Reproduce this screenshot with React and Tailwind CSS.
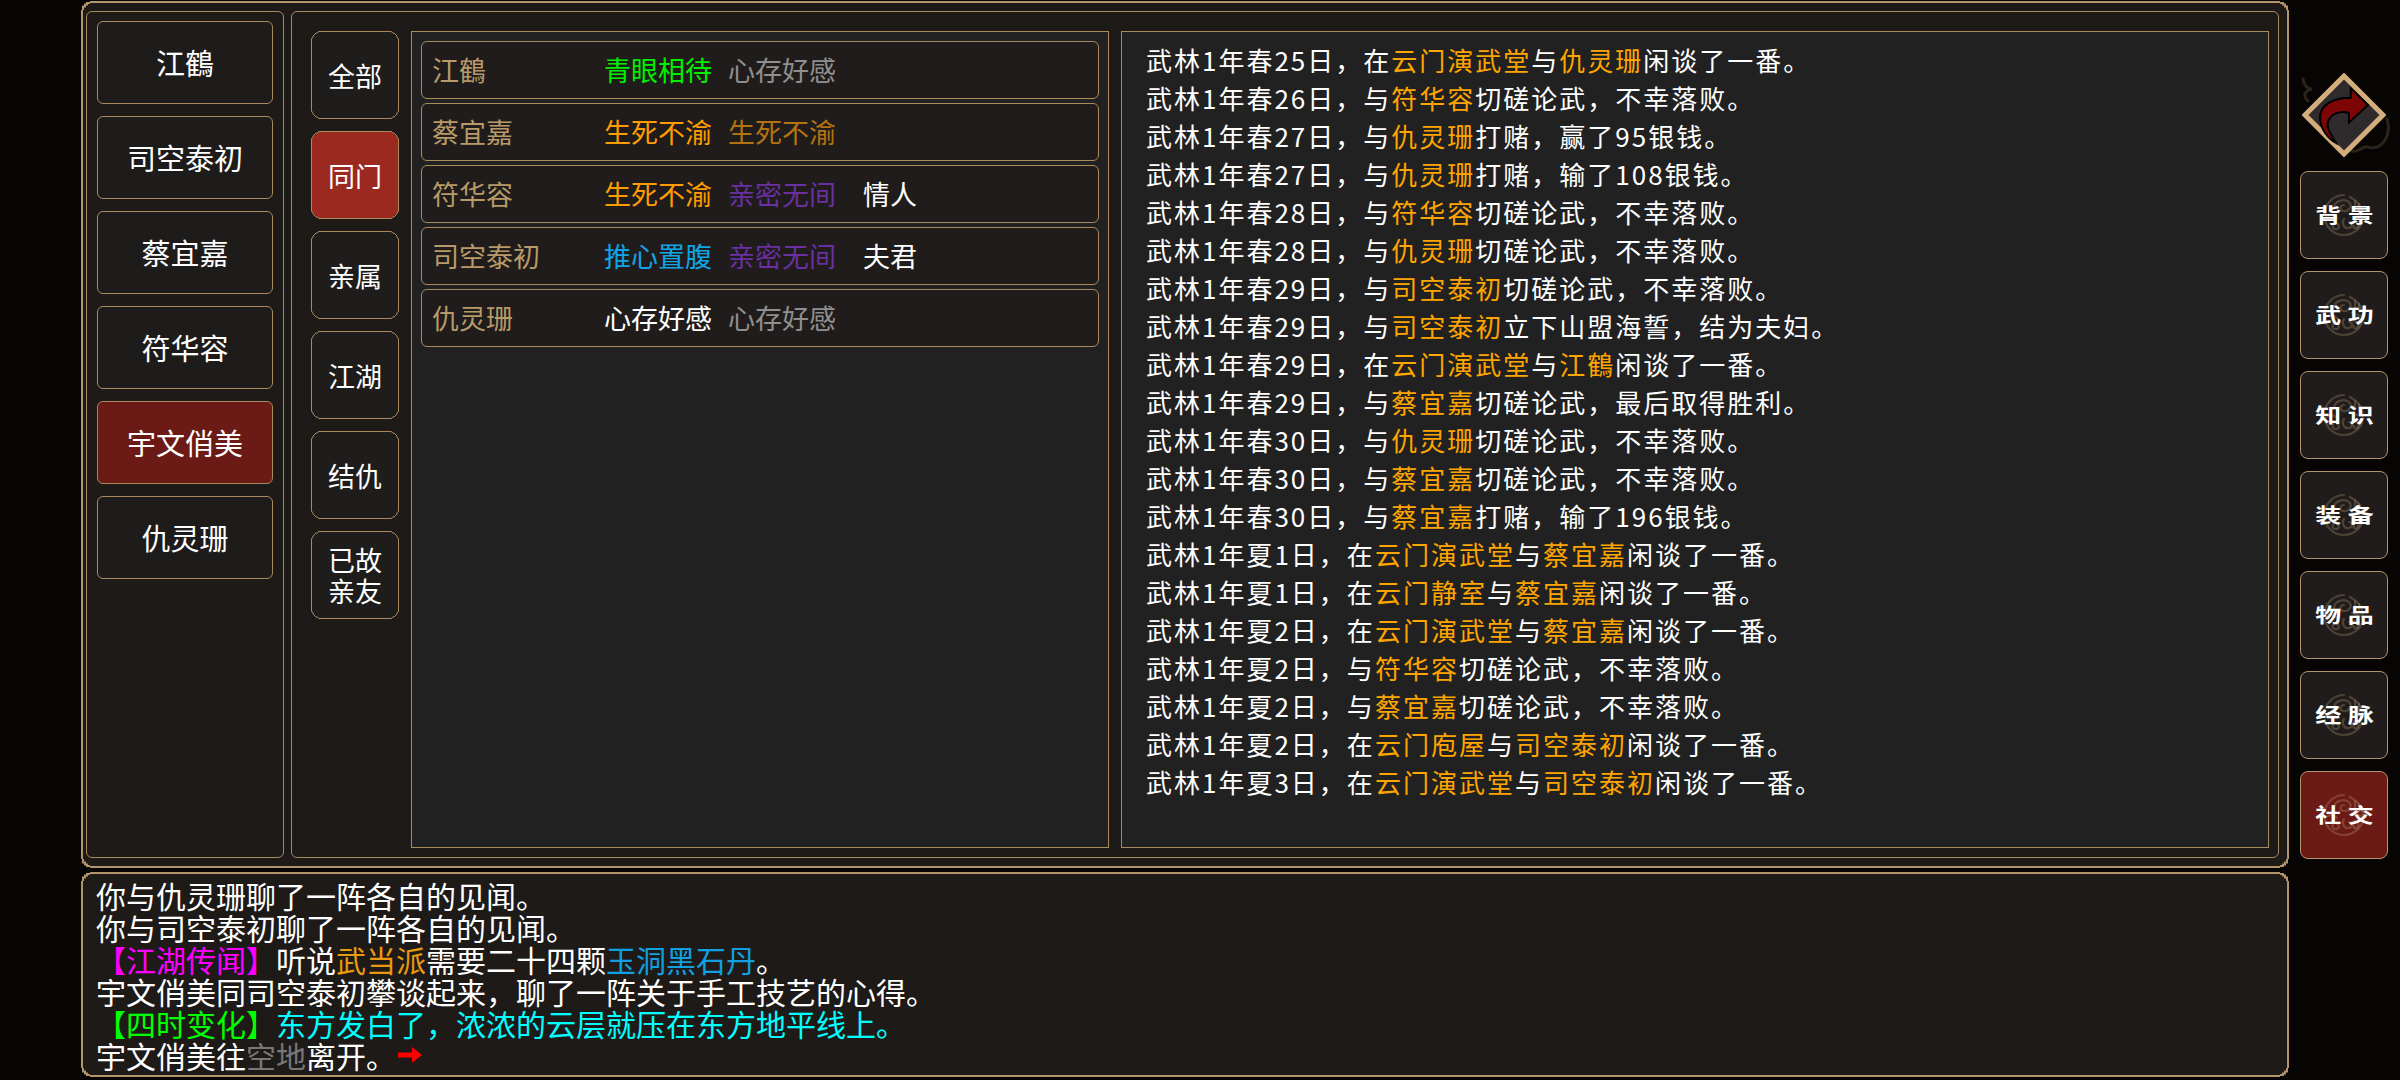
const FONT = "font-['Noto_Sans_CJK_SC','Noto_Sans',sans-serif]";

const people = ['江鶴', '司空泰初', '蔡宜嘉', '符华容', '宇文俏美', '仇灵珊'];
const tabs = [['全部'], ['同门'], ['亲属'], ['江湖'], ['结仇'], ['已故', '亲友']];
const sideButtons = ['背景', '武功', '知识', '装备', '物品', '经脉', '社交'];

const relations = [
  { name: '江鶴', a: ['青眼相待', 'text-[#00f000]'], b: ['心存好感', 'text-[#8f8f8f]'] },
  { name: '蔡宜嘉', a: ['生死不渝', 'text-[#ff9c00]'], b: ['生死不渝', 'text-[#b5730f]'] },
  { name: '符华容', a: ['生死不渝', 'text-[#ff9c00]'], b: ['亲密无间', 'text-[#6a2fa0]'], tag: '情人' },
  { name: '司空泰初', a: ['推心置腹', 'text-[#10a5e8]'], b: ['亲密无间', 'text-[#6a2fa0]'], tag: '夫君' },
  { name: '仇灵珊', a: ['心存好感', 'text-white'], b: ['心存好感', 'text-[#8f8f8f]'] },
];

// {} marks the orange names and places
const logLines = [
  '武林1年春25日，在{云门演武堂}与{仇灵珊}闲谈了一番。',
  '武林1年春26日，与{符华容}切磋论武，不幸落败。',
  '武林1年春27日，与{仇灵珊}打赌，赢了95银钱。',
  '武林1年春27日，与{仇灵珊}打赌，输了108银钱。',
  '武林1年春28日，与{符华容}切磋论武，不幸落败。',
  '武林1年春28日，与{仇灵珊}切磋论武，不幸落败。',
  '武林1年春29日，与{司空泰初}切磋论武，不幸落败。',
  '武林1年春29日，与{司空泰初}立下山盟海誓，结为夫妇。',
  '武林1年春29日，在{云门演武堂}与{江鶴}闲谈了一番。',
  '武林1年春29日，与{蔡宜嘉}切磋论武，最后取得胜利。',
  '武林1年春30日，与{仇灵珊}切磋论武，不幸落败。',
  '武林1年春30日，与{蔡宜嘉}切磋论武，不幸落败。',
  '武林1年春30日，与{蔡宜嘉}打赌，输了196银钱。',
  '武林1年夏1日，在{云门演武堂}与{蔡宜嘉}闲谈了一番。',
  '武林1年夏1日，在{云门静室}与{蔡宜嘉}闲谈了一番。',
  '武林1年夏2日，在{云门演武堂}与{蔡宜嘉}闲谈了一番。',
  '武林1年夏2日，与{符华容}切磋论武，不幸落败。',
  '武林1年夏2日，与{蔡宜嘉}切磋论武，不幸落败。',
  '武林1年夏2日，在{云门庖屋}与{司空泰初}闲谈了一番。',
  '武林1年夏3日，在{云门演武堂}与{司空泰初}闲谈了一番。',
];

function LogLine({ text }) {
  const parts = text.split(/[{}]/);
  return (
    <div className="h-[38px] leading-[38px] whitespace-nowrap">
      {parts.map((p, i) => (
        <span key={i} className={i % 2 ? 'text-[#ffa500]' : 'text-white'}>{p}</span>
      ))}
    </div>
  );
}

// stepped notch of the big frames
function FrameCorner({ className }) {
  return (
    <svg className={`absolute w-[9px] h-[9px] ${className}`} viewBox="0 0 9 9">
      <path d="M0 0H9V1H5V3H3V5H1V9H0Z" fill="#050403" />
      <path d="M2 9V5.5H4V3.5H6V2H9" fill="none" stroke="#b3956b" strokeWidth="2" />
    </svg>
  );
}

function Frame({ className, children }) {
  return (
    <div className={`relative border-2 border-[#b3956b] bg-[#1d1a18] ${className}`}>
      <FrameCorner className="-left-[2px] -top-[2px]" />
      <FrameCorner className="-right-[2px] -top-[2px] -scale-x-100" />
      <FrameCorner className="-left-[2px] -bottom-[2px] -scale-y-100" />
      <FrameCorner className="-right-[2px] -bottom-[2px] -scale-100" />
      {children}
    </div>
  );
}

function TabCorner({ className }) {
  return (
    <svg className={`absolute w-[8px] h-[8px] ${className}`} viewBox="0 0 8 8">
      <path d="M0 0H8L0 8Z" fill="#1d1a18" />
      <path d="M0.5 7.5L2 6.5V5L5 2H6.5L7.5 0.5" fill="none" stroke="#a98a5e" />
    </svg>
  );
}

function Tab({ lines, active }) {
  return (
    <div
      className={`relative h-[88px] w-[88px] flex flex-col items-center justify-center border border-[#a98a5e] text-[27px] leading-[31px] text-white ${
        active ? 'bg-[#9c291f]' : 'bg-[#1f1d1c]'
      }`}
    >
      <TabCorner className="-left-px -top-px" />
      <TabCorner className="-right-px -top-px -scale-x-100" />
      <TabCorner className="-left-px -bottom-px -scale-y-100" />
      <TabCorner className="-right-px -bottom-px -scale-100" />
      {lines.map((l) => (
        <div key={l}>{l}</div>
      ))}
    </div>
  );
}

function Medallion() {
  return (
    <svg className="absolute left-1/2 top-1/2 -translate-x-1/2 -translate-y-1/2 w-[44px] h-[44px]" viewBox="0 0 44 44">
      <g fill="none" stroke="#b89a78" strokeOpacity="0.3" strokeWidth="2.2" strokeLinecap="round">
        <path d="M22 2C13 2 6 8 3 16" />
        <path d="M12 15C12 8 22 5 27 9C31 13 27 19 21 18C17 17 18 12 22 12" />
        <path d="M28 4C34 7 40 13 41 21" />
        <path d="M33 8V16M37 11V19M30 20C34 22 38 22 41 24" />
        <path d="M4 24C8 21 12 22 15 25" />
        <path d="M3 27C5 36 13 42 22 42C30 42 37 37 40 30" />
        <path d="M12 30C9 33 11 37 15 36C18 35 17 31 15 31" />
        <path d="M22 26C19 30 22 36 27 35C31 34 31 29 27 29" />
        <path d="M32 28C36 28 38 32 35 35C33 36 31 35 32 33" />
      </g>
    </svg>
  );
}

function SideButton({ label, active }) {
  return (
    <div
      className={`relative h-[88px] w-[88px] flex items-center justify-center rounded-lg border border-[#b3956b] ${
        active ? 'bg-[#6b1a16]' : 'bg-[#1f1c1b]'
      }`}
    >
      <Medallion />
      <span className="relative scale-x-[1.3] text-[20px] font-bold leading-none tracking-[5px] pl-[5px] text-white">
        {label}
      </span>
    </div>
  );
}

function BackArrow() {
  return (
    <div className="relative h-[84px] w-[84px] my-[0px]">
      <svg className="absolute -left-[12px] -top-[10px] w-[108px] h-[104px]" viewBox="0 0 108 104">
        <g fill="none" stroke="#2a241a" strokeWidth="3" strokeLinecap="round">
          <path d="M13 16C14 22 17 26 22 26C15 28 12 32 18 38" />
          <path d="M97 56C102 72 92 88 78 84C72 82 70 90 62 88" />
        </g>
      </svg>
      <svg className="absolute inset-0 w-[84px] h-[84px]" viewBox="0 0 84 84">
        <path d="M42 3L81 42L42 81L3 42Z" fill="#2f2b2d" stroke="#d3ad7b" strokeWidth="5" />
        <path
          d="M66 32L48.7 15.3V25C32 24 18 32 18 44C18 55 25 65 34 70C28 60 24 54 26 49C28 41 38 37 47 40V49.5Z"
          fill="#7d0505"
          stroke="#000"
          strokeWidth="2"
        />
      </svg>
    </div>
  );
}

export default function App() {
  return (
    <div className={`${FONT} flex h-[1080px] w-[2400px] overflow-hidden bg-[#070504] pl-[81px]`}>
      <div className="flex w-[2208px] flex-col pt-[1px]">
        <Frame className="flex h-[867px] gap-[7px] pb-[8px] pl-[3px] pr-[8px] pt-[8px]">
          <div className="flex w-[198px] flex-col gap-[12px] rounded-md border border-[#a98a5e] px-[10px] pt-[9px]">
            {people.map((p) => (
              <div
                key={p}
                className={`flex h-[83px] items-center justify-center rounded-md border border-[#a98a5e] text-[29px] text-white ${
                  p === '宇文俏美' ? 'bg-[#6b1a16]' : 'bg-[#1e1c1b]'
                }`}
              >
                {p}
              </div>
            ))}
          </div>

          <div className="flex flex-1 gap-[12px] rounded-md border border-[#a98a5e] pb-[9px] pl-[19px] pr-[9px] pt-[19px]">
            <div className="flex w-[88px] flex-col gap-[12px]">
              {tabs.map((t, i) => (
                <Tab key={t[0]} lines={t} active={i === 1} />
              ))}
            </div>

            <div className="flex w-[698px] flex-col gap-[4px] border border-[#a98a5e] bg-[#212121] px-[9px] pt-[9px]">
              {relations.map((r) => (
                <div
                  key={r.name}
                  className="flex h-[58px] items-center rounded-md border border-[#a98a5e] bg-[#1f1c1b] pl-[10px] text-[27px]"
                >
                  <span className="w-[172px] text-[#b89a68]">{r.name}</span>
                  <span className={`w-[124px] ${r.a[1]}`}>{r.a[0]}</span>
                  <span className={`w-[135px] ${r.b[1]}`}>{r.b[0]}</span>
                  {r.tag && <span className="text-white">{r.tag}</span>}
                </div>
              ))}
            </div>

            <div className="flex-1 border border-[#a98a5e] bg-[#212121] pl-[24px] pt-[9px] text-[26px] tracking-[2px]">
              {logLines.map((l, i) => (
                <LogLine key={i} text={l} />
              ))}
            </div>
          </div>
        </Frame>

        <Frame className="mt-[4px] h-[205px] pl-[13px] pt-[5px] text-[30px] leading-[32px] text-white whitespace-nowrap">
          <div>你与仇灵珊聊了一阵各自的见闻。</div>
          <div>你与司空泰初聊了一阵各自的见闻。</div>
          <div>
            <span className="text-[#ff00ff]">【江湖传闻】</span>听说
            <span className="text-[#e89a10]">武当派</span>需要二十四颗
            <span className="text-[#109fe0]">玉洞黑石丹</span>。
          </div>
          <div>宇文俏美同司空泰初攀谈起来，聊了一阵关于手工技艺的心得。</div>
          <div>
            <span className="text-[#00ff00]">【四时变化】</span>
            <span className="text-[#00ffff]">东方发白了，浓浓的云层就压在东方地平线上。</span>
          </div>
          <div className="flex items-center">
            <span>宇文俏美往</span>
            <span className="text-[#777777]">空地</span>
            <span>离开。</span>
            <svg className="ml-[2px] h-[16px] w-[24px]" viewBox="0 0 24 16">
              <path d="M0 5.5H14V0L24 8L14 16V10.5H0Z" fill="#ff0000" />
            </svg>
          </div>
        </Frame>
      </div>

      <div className="flex flex-1 flex-col items-center pt-[73px] pr-[1px]">
        <BackArrow />
        <div className="mt-[14px] flex flex-col gap-[12px]">
          {sideButtons.map((b) => (
            <SideButton key={b} label={b} active={b === '社交'} />
          ))}
        </div>
      </div>
    </div>
  );
}
